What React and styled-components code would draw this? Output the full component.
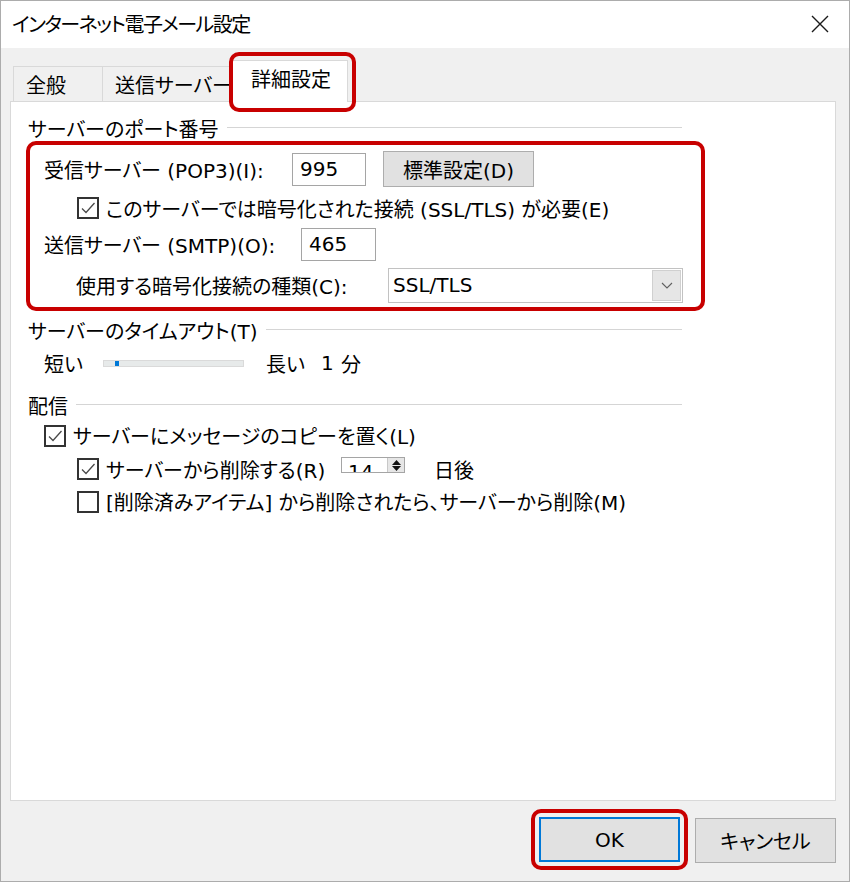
import styled, { createGlobalStyle } from "styled-components";

const GlobalStyle = createGlobalStyle`
  html, body {
    margin: 0;
    padding: 0;
    background: #fff;
  }
  body {
    font-family: "DejaVu Sans", "Noto Sans CJK JP", sans-serif;
    font-feature-settings: "palt";
    color: #000;
  }
`;

const Window = styled.div`
  width: 850px;
  height: 882px;
  box-sizing: border-box;
  border: 1px solid #acacac;
  display: flex;
  flex-direction: column;
  font-size: 20px;
`;

const TitleBar = styled.div`
  height: 47px;
  flex: 0 0 47px;
  background: #fff;
  display: flex;
  align-items: center;
  justify-content: space-between;
  padding: 0 20px 2px 11px;
  box-sizing: border-box;
`;

const Title = styled.span`
  font-size: 20px;
  letter-spacing: -1.5px;
`;

const Body = styled.div`
  flex: 1;
  background: #f0f0f0;
  padding: 0 13px 0 9px;
  display: flex;
  flex-direction: column;
`;

const TabRow = styled.div`
  height: 53px;
  display: flex;
  align-items: flex-end;
  padding-left: 3px;
`;

const Tab = styled.div`
  position: relative;
  box-sizing: border-box;
  width: ${(p) => p.$w}px;
  height: ${(p) => (p.$active ? 42 : 35)}px;
  padding-left: ${(p) => (p.$active ? 18 : 12)}px;
  padding-bottom: ${(p) => (p.$active ? 6 : 0)}px;
  background: ${(p) => (p.$active ? "#fff" : "#f0f0f0")};
  border: 1px solid #d9d9d9;
  border-bottom: none;
  border-left: ${(p) => (p.$first || p.$active ? "1px solid #d9d9d9" : "none")};
  display: flex;
  align-items: center;
  white-space: nowrap;
  overflow: hidden;
`;

const TabMark = styled.div`
  position: absolute;
  left: -3px;
  top: -8px;
  right: -8px;
  bottom: -10px;
  border: 4px solid #c80000;
  border-radius: 10px;
  pointer-events: none;
`;

const TabWrap = styled.div`
  position: relative;
  display: flex;
  z-index: 2;
  margin-left: -2px;
  margin-bottom: -1px;
`;

const Panel = styled.div`
  height: 700px;
  flex: 0 0 700px;
  box-sizing: border-box;
  background: #fff;
  border: 1px solid #d9d9d9;
  padding: 13px 0 0 17px;
`;

const Group = styled.div`
  width: 654px;
`;

const Heading = styled.div`
  display: flex;
  align-items: center;
  height: ${(p) => p.$h || 26}px;
  margin-top: ${(p) => p.$mt || 0}px;
  white-space: nowrap;
  &::after {
    content: "";
    flex: 1;
    border-top: 1px solid #d5d5d5;
    margin-left: 8px;
    margin-top: -2px;
  }
`;

const MarkBox = styled.div`
  margin-left: -2px;
  width: 679px;
  box-sizing: border-box;
  border: 4px solid #c80000;
  border-radius: 10px;
  padding: 0 0 2px 14px;
`;

const Row = styled.div`
  display: flex;
  align-items: center;
  height: ${(p) => p.$h}px;
  padding-left: ${(p) => p.$indent || 0}px;
  white-space: nowrap;
`;

const Label = styled.span`
  width: ${(p) => (p.$w ? `${p.$w}px` : "auto")};
  flex: 0 0 auto;
`;

const TextInput = styled.div`
  box-sizing: border-box;
  width: ${(p) => p.$w}px;
  height: 33px;
  border: 1px solid #a5a5a5;
  background: #fff;
  padding-left: 7px;
  display: flex;
  align-items: center;
`;

const Button = styled.div`
  box-sizing: border-box;
  width: ${(p) => p.$w}px;
  height: ${(p) => p.$h}px;
  margin-left: ${(p) => p.$ml || 0}px;
  margin-top: ${(p) => p.$mt || 0}px;
  background: #e1e1e1;
  border: ${(p) => (p.$default ? "2px solid #0078d7" : "1px solid #adadad")};
  display: flex;
  align-items: center;
  justify-content: center;
`;

const Select = styled.div`
  box-sizing: border-box;
  width: 295px;
  height: 35px;
  border: 1px solid #c2c2c2;
  background: #fff;
  display: flex;
  align-items: stretch;
  padding: 1px 1px 1px 4px;
`;

const SelectText = styled.span`
  flex: 1;
  display: flex;
  align-items: center;
`;

const DropButton = styled.div`
  width: 29px;
  box-sizing: border-box;
  background: #e6e6e6;
  border: 1px solid #d0d0d0;
  display: flex;
  align-items: center;
  justify-content: center;
`;

const Box = styled.div`
  box-sizing: border-box;
  width: 22px;
  height: 22px;
  border: 2px solid #333;
  background: #fff;
  margin-right: 7px;
  flex: 0 0 22px;
  display: flex;
  align-items: center;
  justify-content: center;
`;

const Track = styled.div`
  position: relative;
  box-sizing: border-box;
  width: 141px;
  height: 7px;
  background: #e7eaea;
  border: 1px solid #dadada;
  margin-right: 22px;
`;

const Thumb = styled.div`
  position: absolute;
  left: 11px;
  top: 0px;
  width: 4px;
  height: 5px;
  background: #0078d7;
`;

const Spinner = styled.div`
  box-sizing: border-box;
  width: 64px;
  height: 16px;
  border: 1px solid #a5a5a5;
  background: #fff;
  display: flex;
  overflow: hidden;
  margin-bottom: 8px;
  margin-right: 29px;
`;

const SpinText = styled.span`
  flex: 1;
  padding-left: 6px;
  padding-top: 4px;
  line-height: 20px;
  font-size: 20px;
`;

const SpinButtons = styled.div`
  width: 16px;
  background: #e6e6e6;
  border-left: 1px solid #c8c8c8;
  display: flex;
  flex-direction: column;
  align-items: center;
  justify-content: center;
  gap: 1px;
`;

const Footer = styled.div`
  flex: 1;
  display: flex;
  justify-content: flex-end;
  align-items: flex-start;
  padding-top: 8px;
`;

const OkMark = styled.div`
  border: 4px solid #c80000;
  border-radius: 10px;
  padding: 4px;
  margin-right: 7px;
  display: flex;
`;

const Check = ({ checked }) => (
  <Box>
    {checked && (
      <svg width="18" height="18" viewBox="0 0 18 18">
        <path d="M3 9.5 L7 13.5 L15.5 4" fill="none" stroke="#4a4a4a" strokeWidth="1.3" />
      </svg>
    )}
  </Box>
);

const CloseIcon = () => (
  <svg width="18" height="18" viewBox="0 0 18 18">
    <path d="M1 1 L17 17 M17 1 L1 17" stroke="#1a1a1a" strokeWidth="1.4" />
  </svg>
);

const Chevron = () => (
  <svg width="12" height="7" viewBox="0 0 12 7">
    <path d="M1 1 L6 6 L11 1" fill="none" stroke="#606060" strokeWidth="1.1" />
  </svg>
);

const Tri = ({ up }) => (
  <svg width="9" height="5" viewBox="0 0 9 5">
    <path d={up ? "M0 5 L4.5 0 L9 5 Z" : "M0 0 L4.5 5 L9 0 Z"} fill="#111" />
  </svg>
);

export default function App() {
  return (
    <>
      <GlobalStyle />
      <Window>
        <TitleBar>
          <Title>インターネット電子メール設定</Title>
          <CloseIcon />
        </TitleBar>
        <Body>
          <TabRow>
            <Tab $w={90} $first>全般</Tab>
            <Tab $w={131}>送信サーバー</Tab>
            <TabWrap>
              <Tab $w={116} $active>
                詳細設定
              </Tab>
              <TabMark />
            </TabWrap>
          </TabRow>
          <Panel>
            <Group>
              <Heading>サーバーのポート番号</Heading>
              <MarkBox>
                <Row $h={48}>
                  <Label $w={248}>受信サーバー (POP3)(I):</Label>
                  <TextInput $w={74}>995</TextInput>
                  <Button $w={151} $h={36} $ml={17}>標準設定(D)</Button>
                </Row>
                <Row $h={30} $indent={33}>
                  <Check checked />
                  <Label>このサーバーでは暗号化された接続 (SSL/TLS) が必要(E)</Label>
                </Row>
                <Row $h={42}>
                  <Label $w={257}>送信サーバー (SMTP)(O):</Label>
                  <TextInput $w={75}>465</TextInput>
                </Row>
                <Row $h={40} $indent={32}>
                  <Label $w={312}>使用する暗号化接続の種類(C):</Label>
                  <Select>
                    <SelectText>SSL/TLS</SelectText>
                    <DropButton>
                      <Chevron />
                    </DropButton>
                  </Select>
                </Row>
              </MarkBox>

              <Heading $h={28} $mt={5}>サーバーのタイムアウト(T)</Heading>
              <Row $h={38} $indent={16}>
                <Label $w={59}>短い</Label>
                <Track>
                  <Thumb />
                </Track>
                <Label $w={55}>長い</Label>
                <Label $w={20}>1</Label>
                <Label>分</Label>
              </Row>

              <Heading $mt={10}>配信</Heading>
              <Row $h={35} $indent={16}>
                <Check checked />
                <Label>サーバーにメッセージのコピーを置く(L)</Label>
              </Row>
              <Row $h={32} $indent={49}>
                <Check checked />
                <Label $w={235}>サーバーから削除する(R)</Label>
                <Spinner>
                  <SpinText>14</SpinText>
                  <SpinButtons>
                    <Tri up />
                    <Tri />
                  </SpinButtons>
                </Spinner>
                <Label>日後</Label>
              </Row>
              <Row $h={33} $indent={49}>
                <Check />
                <Label>[削除済みアイテム] から削除されたら、サーバーから削除(M)</Label>
              </Row>
            </Group>
          </Panel>
          <Footer>
            <OkMark>
              <Button $w={141} $h={45} $default>OK</Button>
            </OkMark>
            <Button $w={141} $h={45} $mt={9}>キャンセル</Button>
          </Footer>
        </Body>
      </Window>
    </>
  );
}
